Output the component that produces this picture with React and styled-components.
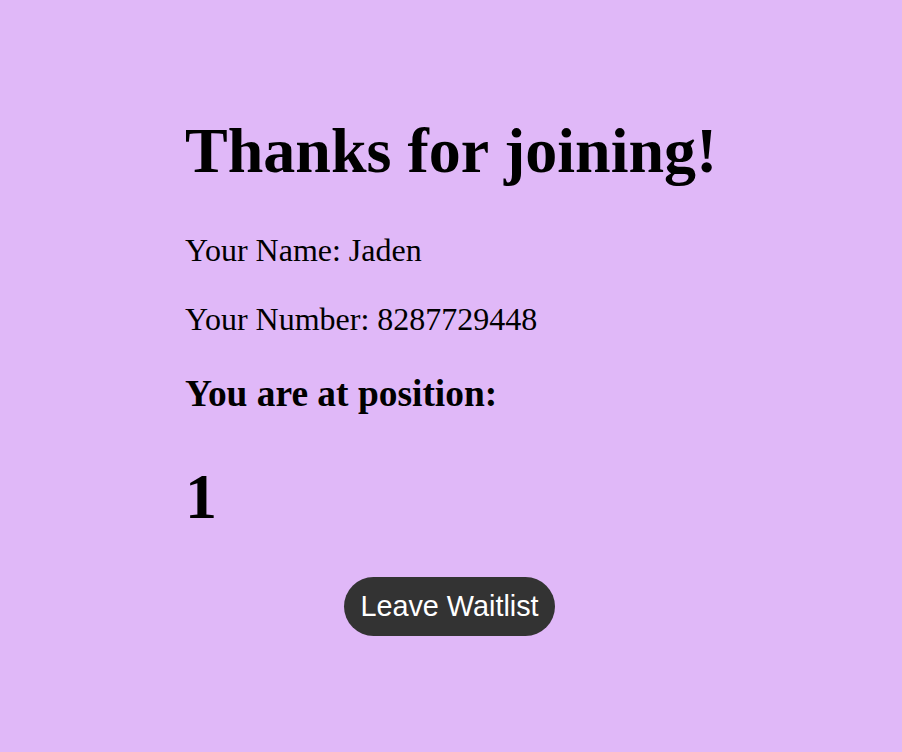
import React from "react";
import styled, { createGlobalStyle } from "styled-components";

const GlobalStyle = createGlobalStyle`
  html, body {
    margin: 0;
    padding: 0;
    background: #e0b8f8;
  }
  body {
    font-family: "Liberation Serif", "Times New Roman", serif;
    color: #000;
  }
`;

const Page = styled.main`
  min-height: 752px;
  box-sizing: border-box;
  padding-top: 114px;
`;

const Card = styled.section`
  width: 532px;
  margin: 0 auto;
`;

const Title = styled.h1`
  font-size: 64px;
  font-weight: bold;
  white-space: nowrap;
  margin: 0 0 44px;
  line-height: normal;
`;

const Info = styled.p`
  font-size: 32px;
  margin: 0 0 ${(p) => p.$gap ?? 32}px;
  line-height: normal;
`;

const Label = styled.h3`
  font-size: 37.44px;
  font-weight: bold;
  margin: 0 0 45px;
  line-height: normal;
`;

const Position = styled.h1`
  font-size: 64px;
  font-weight: bold;
  margin: 0 0 43px;
  line-height: normal;
`;

const ButtonRow = styled.div`
  display: flex;
  justify-content: center;
  padding-right: 3px;
`;

const LeaveButton = styled.button`
  font-family: "Liberation Sans", Arial, sans-serif;
  font-size: 28.8px;
  color: #fff;
  background: #333333;
  border: none;
  border-radius: 30px;
  padding: 13px 16px;
  line-height: normal;
  cursor: pointer;
`;

export default function App() {
  return (
    <>
      <GlobalStyle />
      <Page>
        <Card>
          <Title>Thanks for joining!</Title>
          <Info>Your Name: Jaden</Info>
          <Info $gap={34}>Your Number: 8287729448</Info>
          <Label>You are at position:</Label>
          <Position>1</Position>
          <ButtonRow>
            <LeaveButton>Leave Waitlist</LeaveButton>
          </ButtonRow>
        </Card>
      </Page>
    </>
  );
}
